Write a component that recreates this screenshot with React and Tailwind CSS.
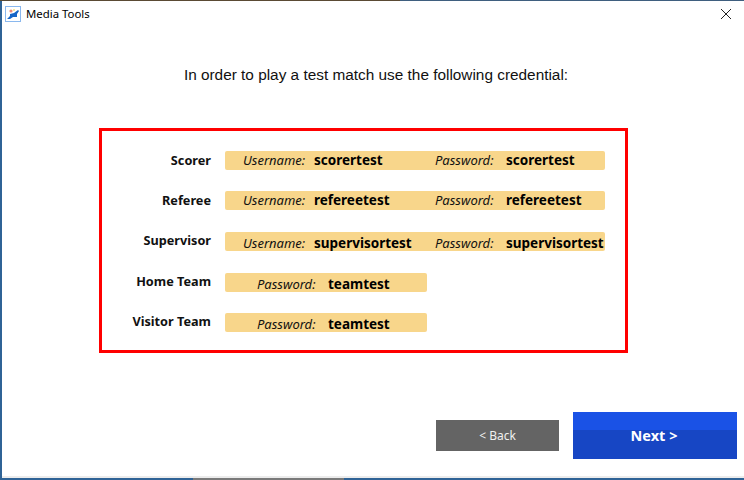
import React from "react";

const sans = "font-['Noto_Sans','Open_Sans',sans-serif]";

const Cred = ({ label, value, className }) => (
  <div className={"flex items-center " + className}>
    <span className="w-[71px] italic text-[13px] text-[#111]">{label}</span>
    <span className="font-bold text-[13.5px] text-black">{value}</span>
  </div>
);

const rows = [
  { name: "Scorer", user: "scorertest", pass: "scorertest", labelCls: "", pillCls: "", gap: "" },
  { name: "Referee", user: "refereetest", pass: "refereetest", labelCls: "", pillCls: "", gap: "mt-[21px]" },
  { name: "Supervisor", user: "supervisortest", pass: "supervisortest", labelCls: "pb-[2px]", pillCls: "pt-[4px]", gap: "mt-[22px]" },
];

const App = () => {
  return (
    <div className={"w-[744px] h-[480px] bg-white flex flex-col overflow-hidden " + sans}>
      <div className="h-[1px] flex shrink-0">
        <div className="w-[400px] bg-[#5a4a34]" />
        <div className="flex-1 bg-[#3f5f7f]" />
      </div>
      <div className="flex flex-1 min-h-0">
        <div className="w-[2px] bg-[#2f6396]" />
        <div className="flex-1 min-w-0 flex flex-col">
          {/* title bar */}
          <div className="h-[26px] flex items-center pl-[3px] pr-[12px] justify-between">
            <div className="flex items-center gap-[5px]">
              <svg width="16" height="16" viewBox="0 0 16 16">
                <rect x="0.5" y="0.5" width="15" height="15" fill="#fff" stroke="#8ab8ee" />
                <path d="M2 13 L5 10 L5 8 L9 7 L13 4 L14 5 L12 8 L12 11 L8 11 L5 13 Z" fill="#1666c8" />
                <circle cx="6" cy="5" r="1.6" fill="#ec8a7a" />
                <circle cx="9" cy="4" r="1" fill="#f6e27a" />
              </svg>
              <span className="text-[11.4px] text-black">Media Tools</span>
            </div>
            <svg width="12" height="12" viewBox="0 0 12 12">
              <path d="M1 1 L11 11 M11 1 L1 11" stroke="#222" strokeWidth="1" fill="none" />
            </svg>
          </div>

          <p className="mt-[36px] pl-[6px] text-center text-[15.36px] leading-[24px] text-[#111] font-['Liberation_Sans',sans-serif]">
            In order to play a test match use the following credential:
          </p>

          {/* credentials box */}
          <div className="mt-[41px] ml-[97px] w-[529px] h-[225px] border-[3px] border-[#ff0000] pt-[20px] pl-[28px] flex flex-col">
            {rows.map((r) => (
              <div key={r.name} className={"flex items-center h-[19px] " + r.gap}>
                <span className={"w-[81px] text-right font-bold text-[12.7px] text-[#111] " + r.labelCls}>{r.name}</span>
                <div className={"ml-[14px] w-[380px] h-[19px] bg-[#f8d68b] rounded-[2px] flex items-center pl-[18px] " + r.pillCls}>
                  <Cred label="Username:" value={r.user} className="w-[192px]" />
                  <Cred label="Password:" value={r.pass} />
                </div>
              </div>
            ))}
            {["Home Team", "Visitor Team"].map((n, i) => (
              <div key={n} className={"flex items-center h-[19px] " + (i === 0 ? "mt-[22px]" : "mt-[21px]")}>
                <span className="w-[81px] text-right font-bold text-[12.7px] text-[#111] pb-[2px]">{n}</span>
                <div className="ml-[14px] w-[202px] h-[19px] bg-[#f8d68b] rounded-[2px] flex items-center pl-[32px] pt-[4px]">
                  <Cred label="Password:" value="teamtest" />
                </div>
              </div>
            ))}
          </div>

          {/* buttons */}
          <div className="mt-[59px] flex items-center justify-end pr-[7px] gap-[14px]">
            <button className="w-[123px] h-[31px] bg-[#646464] text-[#f0f0f0] text-[12px]">&lt; Back</button>
            <button className="relative w-[164px] h-[47px] pr-[2px] bg-[#1746c4] text-white font-bold text-[14.5px]">
              <span className="absolute inset-x-0 top-0 h-[18px] bg-[#1a52e6]" />
              <span className="relative">Next &gt;</span>
            </button>
          </div>

          <div className="mt-auto h-[2px] bg-[#ececec]" />
        </div>
      </div>
      <div className="h-[2px] flex shrink-0">
        <div className="w-[193px] bg-[#2f6396]" />
        <div className="w-[151px] bg-[#7a7a7a]" />
        <div className="flex-1 bg-[#2f6396]" />
      </div>
    </div>
  );
};

export default App;
